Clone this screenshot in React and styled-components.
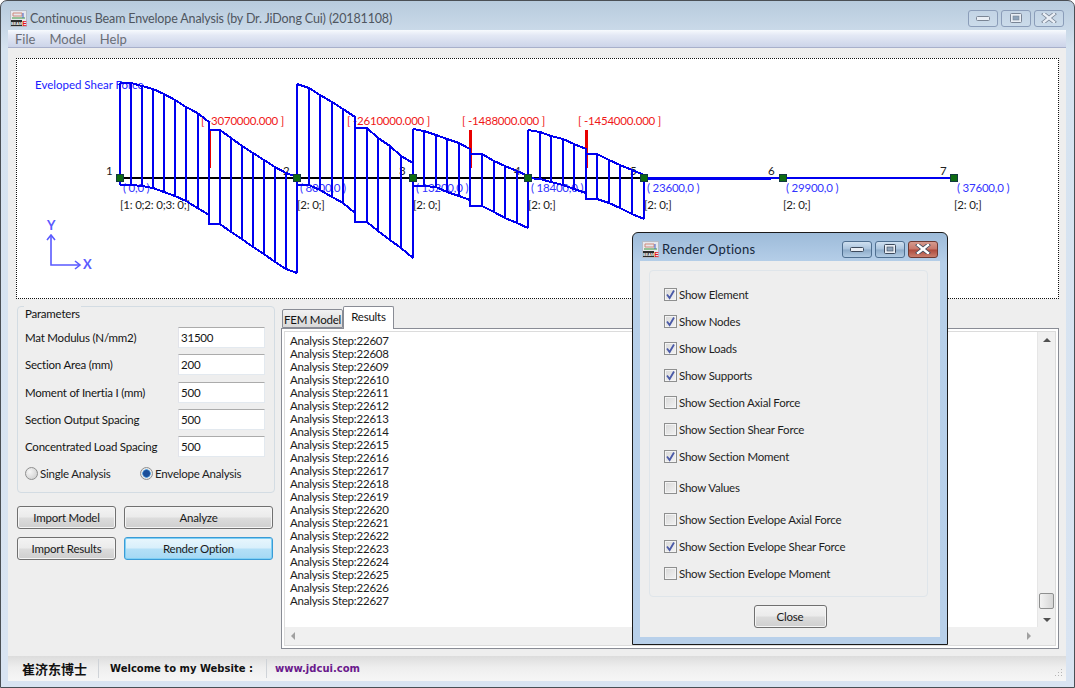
import React from "react";
import styled, { createGlobalStyle } from "styled-components";

const UI = `"Lato", "Open Sans", sans-serif`;

const Global = createGlobalStyle`
  html, body { margin: 0; padding: 0; background: #fff; }
  * { box-sizing: border-box; }
  body { font-family: ${UI}; font-size: 11.5px; letter-spacing: -0.22px; color: #141414; white-space: nowrap; }
`;

const Win = styled.div`
  position: relative;
  width: 1075px;
  height: 688px;
  overflow: hidden;
  display: flex;
  flex-direction: column;
  padding: 0 8px 6px 7px;
  border: 1px solid #4a4f55;
  border-radius: 7px 7px 0 0;
  background: linear-gradient(180deg, #b7cbdd 0, #d6e3f0 48px, #d9e4f2 100%);
`;
const TitleBar = styled.div`
  height: 29px;
  padding-top: 5px;
  display: flex;
  align-items: center;
  flex: none;
`;
const DialogTitle = styled(TitleBar)`
  height: 28px;
  padding-top: 4px;
`;
const AppIconBox = styled.span`
  width: 17px;
  height: 17px;
  margin: 0 3px 0 2px;
  display: block;
  flex: none;
`;
const TitleText = styled.div`
  flex: 1;
  font-size: ${p => (p.$active ? 13 : 12.5)}px;
  letter-spacing: ${p => (p.$active ? 0.3 : -0.14)}px;
  color: ${p => (p.$active ? "#16283c" : "#4f5660")};
`;
const Ctrls = styled.div`
  display: flex;
  gap: 3px;
  margin-right: 2px;
`;
const Ctrl = styled.div`
  width: 30px;
  height: 17px;
  border: 1px solid ${p => (p.$tone === "active" ? "#4f6f90" : p.$tone === "close" ? "#6d3a33" : "#8b9db9")};
  border-radius: 3px;
  display: flex;
  align-items: center;
  justify-content: center;
  background: ${p =>
    p.$tone === "close"
      ? "linear-gradient(180deg,#d59a8e 0,#c7776a 48%,#ad4a3c 52%,#c97f6e 100%)"
      : p.$tone === "active"
      ? "linear-gradient(180deg,#cfe0f0 0,#a9c3dd 48%,#8dabc9 52%,#b1cbe3 100%)"
      : "linear-gradient(180deg,#c3d4e5 0,#cbdbea 100%)"};
`;
const MenuBar = styled.div`
  height: 18px;
  flex: none;
  display: flex;
  align-items: center;
  gap: 14px;
  padding-left: 7px;
  font-size: 13px;
  letter-spacing: 0;
  color: #6a6e78;
  border-bottom: 1px solid #a8b0cb;
  background: linear-gradient(180deg, #f7fafd 0, #e4e9f5 30%, #ccd4e9 100%);
`;
const Main = styled.div`
  flex: 1;
  min-height: 0;
  background: #eeeeee;
  padding: 10px 7px 0 8px;
  display: flex;
  flex-direction: column;
`;
const Chart = styled.div`
  height: 241px;
  flex: none;
  border: 1px dotted #111;
  background: #fff;
`;
const ChartSvg = styled.svg`
  display: block;
  width: 100%;
  height: 100%;
  font-family: ${UI};
`;
const Lower = styled.div`
  flex: 1;
  min-height: 0;
  display: flex;
  margin-top: 7px;
  padding-bottom: 7px;
`;
const LeftCol = styled.div`
  width: 256px;
  margin-left: 1px;
  margin-right: 8px;
  flex: none;
  display: flex;
  flex-direction: column;
`;
const Group = styled.fieldset`
  margin: 0;
  padding: 17px 9px 0 7px;
  height: 187px;
  border: 1px solid #d3dce3;
  border-radius: 4px;
  position: relative;
`;
const GroupTitle = styled.span`
  position: absolute;
  left: 6px;
  top: -1px;
  padding: 0 1px;
  line-height: 16px;
  background: #eee;
`;
const Field = styled.div`
  height: 27.25px;
  display: flex;
  align-items: center;
  justify-content: space-between;
`;
const Input = styled.div`
  width: 87px;
  height: 21px;
  line-height: 19px;
  padding-left: 2px;
  background: #fff;
  border: 1px solid;
  border-color: #ababab #e3e9ef #e3e9ef #e2e3ea;
`;
const RadioRow = styled.div`
  display: flex;
  align-items: center;
  margin-top: 1px;
  height: 24px;
`;
const RadioItem = styled.div`
  display: flex;
  align-items: center;
  gap: 2px;
  color: #222;
  width: ${p => p.$w}px;
`;
const RadioDot = styled.span`
  width: 13px;
  height: 13px;
  border-radius: 50%;
  border: 1px solid #8e8f8f;
  flex: none;
  background: ${p =>
    p.$on
      ? "radial-gradient(circle at 50% 50%, #1b4f9a 0 3px, #5aa3e0 4px, #e9e9e9 4.5px)"
      : "radial-gradient(circle at 35% 35%, #f6f6f6, #c9c9c9)"};
`;
const BtnGrid = styled.div`
  display: grid;
  grid-template-columns: 99px 149px;
  column-gap: 8px;
  row-gap: 8px;
  margin-top: 13px;
`;
const Btn = styled.div`
  height: 23px;
  line-height: 21px;
  text-align: center;
  border: 1px solid ${p => (p.$focus ? "#3a9bd6" : "#707070")};
  border-radius: 3px;
  color: #1a1a1a;
  background: ${p =>
    p.$focus
      ? "linear-gradient(180deg,#e8f6fd 0,#d8effb 48%,#b4e0f7 52%,#a4d8f4 100%)"
      : "linear-gradient(180deg,#f3f3f3 0,#ebebeb 48%,#dcdcdc 52%,#cfcfcf 100%)"};
  box-shadow: ${p => (p.$focus ? "inset 0 0 0 1px #7fd0f5" : "inset 0 0 0 1px #f5f5f5")};
`;
const RightCol = styled.div`
  flex: 1;
  min-width: 0;
  display: flex;
  flex-direction: column;
`;
const Tabs = styled.div`
  height: 22px;
  flex: none;
  display: flex;
  align-items: flex-end;
  padding-left: 1px;
`;
const Tab = styled.div`
  position: relative;
  height: ${p => (p.$on ? 23 : 19)}px;
  line-height: 19px;
  width: ${p => p.$w}px;
  text-align: center;
  border: 1px solid #898c95;
  border-bottom: ${p => (p.$on ? "none" : "1px solid #898c95")};
  border-radius: 2px 2px 0 0;
  margin-bottom: ${p => (p.$on ? -1 : 0)}px;
  background: ${p => (p.$on ? "#fff" : "linear-gradient(180deg,#f2f2f2,#d9d9d9)")};
  z-index: ${p => (p.$on ? 2 : 1)};
`;
const TabPanel = styled.div`
  flex: 1;
  min-height: 0;
  border: 1px solid #898c95;
  background: #fff;
  padding: 2px;
`;
const LogBox = styled.div`
  height: 100%;
  border: 1px solid #dcdcdc;
  display: grid;
  grid-template-columns: 1fr 18px;
  grid-template-rows: 1fr 18px;
`;
const Log = styled.div`
  padding: 2px 0 0 5px;
  line-height: 13px;
  overflow: hidden;
  color: #1c1c1c;
`;
const ScrollV = styled.div`
  background: #f0f0f0;
  border-left: 1px solid #e6e6e6;
  position: relative;
  display: flex;
  flex-direction: column;
  justify-content: space-between;
  align-items: center;
  padding: 6px 0 5px;
`;
const Thumb = styled.div`
  position: absolute;
  left: 1px;
  right: 1px;
  bottom: 18px;
  height: 16px;
  border: 1px solid #8e8f8f;
  border-radius: 2px;
  background: linear-gradient(90deg, #f3f3f3, #d6d6d6);
`;
const ScrollH = styled.div`
  background: #f0f0f0;
  display: flex;
  align-items: center;
  justify-content: space-between;
  padding: 0 6px;
`;
const Corner = styled.div`
  background: #f0f0f0;
`;
const Arrow = styled.span`
  width: 0;
  height: 0;
  border-style: solid;
  border-color: transparent;
  ${p => p.$dir === "up" && "border-width: 0 4px 4px; border-bottom-color: #505050;"}
  ${p => p.$dir === "down" && "border-width: 4px 4px 0; border-top-color: #505050;"}
  ${p => p.$dir === "left" && "border-width: 4px 4px 4px 0; border-right-color: #a0a0a0;"}
  ${p => p.$dir === "right" && "border-width: 4px 0 4px 4px; border-left-color: #a0a0a0;"}
`;
const Status = styled.div`
  height: 25px;
  flex: none;
  position: relative;
  display: flex;
  align-items: center;
  padding-left: 14px;
  letter-spacing: 0;
  background: linear-gradient(180deg, #dcdcdc 0, #eeeeee 45%, #f6f6f6 100%);
`;
const StatusCn = styled.span`
  font-family: "Noto Sans CJK SC", sans-serif;
  font-weight: 700;
  font-size: 13px;
  width: 76px;
  color: #111;
`;
const StatusWel = styled.span`
  font-family: "DejaVu Sans", sans-serif;
  font-weight: 700;
  font-size: 10px;
  width: 167px;
  color: #111;
  padding-left: 11px;
`;
const StatusUrl = styled.span`
  font-family: "DejaVu Sans", sans-serif;
  font-weight: 700;
  font-size: 10px;
  color: #6a1a8c;
  padding-left: 8px;
`;
const StatusSep = styled.span`
  width: 1px;
  height: 19px;
  background: #cfd3d8;
  flex: none;
`;
const Grip = styled.svg`
  position: absolute;
  right: 3px;
  bottom: 3px;
  width: 10px;
  height: 10px;
`;
const Dialog = styled.div`
  position: absolute;
  left: 631px;
  top: 231px;
  width: 316px;
  height: 413px;
  border: 1px solid #1a1a1a;
  border-radius: 6px 6px 0 0;
  padding: 0 7px 7px;
  display: flex;
  flex-direction: column;
  background: linear-gradient(180deg, #9dbbd9 0, #b6cfe9 30px, #b8d0ea 100%);
`;
const DialogBody = styled.div`
  flex: 1;
  background: #eeeeee;
  padding: 9px 12px 0 9px;
  display: flex;
  flex-direction: column;
`;
const DialogGroup = styled.div`
  height: 327px;
  flex: none;
  border: 1px solid #dfe5ea;
  border-radius: 4px;
  padding: 10px 0 0 14px;
  display: flex;
  flex-direction: column;
`;
const CheckRow = styled.div`
  height: 27px;
  flex: none;
  margin-top: ${p => p.$gap || 0}px;
  display: flex;
  align-items: center;
  gap: 2px;
  color: #1e1e1e;
`;
const CheckBox = styled.span`
  width: 13px;
  height: 13px;
  flex: none;
  border: 1px solid #8e8f8f;
  background: linear-gradient(135deg, #d8d8d8 0, #f3f3f3 100%);
  box-shadow: inset 0 0 0 1px #f4f4f4;
  display: flex;
  align-items: center;
  justify-content: center;
`;
const CloseRow = styled.div`
  display: flex;
  justify-content: center;
  margin-top: 8px;
  padding-left: 3px;
`;
const CloseBtn = styled(Btn)`
  width: 73px;
`;

const spans = [
  [[120,83,185],[131,83,185],[142,86,186],[153,89,188],[164,94,192],[175,100,196],[186,107,201],[197.5,113,208],[209,122,215],[209,130,224],[220,130,224],[231,138,232],[242,146,239],[253,153,247],[264,160,254],[275,167,262],[286,173,269],[297,177,273]],
  [[297,84,185],[309,88,185],[320,95,190],[332,102,197],[343,109,203],[355,117,213],[355,128,222],[367,128,222],[378,138,231],[390,146,240],[401,156,248],[413,163,258]],
  [[413,129,186],[424,131,186],[436,135,187],[447,139,192],[459,143,196],[470,149,200],[470,154,206],[482,154,206],[494,161,212],[505,166,218],[517,171,223],[528,176,228]],
  [[528,130,178],[540,132,179],[551,136,182],[563,139,185],[574,144,189],[586,149,193],[586,154,199],[597,154,199],[609,160,203],[620,165,208],[632,170,214],[644,175,219]],
];
const nodes = [
  { x: 120, n: "1", nx: 106, c: "( 0,0 )", cx: 123, l: "[1: 0;2: 0;3: 0;]" },
  { x: 297, n: "2", nx: 283, c: "( 8000,0 )", cx: 300, l: "[2: 0;]" },
  { x: 413, n: "3", nx: 399, c: "( 13200,0 )", cx: 416, l: "[2: 0;]" },
  { x: 528, n: "4", nx: 514, c: "( 18400,0 )", cx: 531, l: "[2: 0;]" },
  { x: 644, n: "5", nx: 630, c: "( 23600,0 )", cx: 647, l: "[2: 0;]" },
  { x: 783, n: "6", nx: 768, c: "( 29900,0 )", cx: 786, l: "[2: 0;]" },
  { x: 954, n: "7", nx: 940, c: "( 37600,0 )", cx: 957, l: "[2: 0;]" },
];
const loads = [
  { x: 210, w: 2, t: "[ -3070000.000 ]", tx: 201, top: 130 },
  { x: 355, w: 2, t: "[ -2610000.000 ]", tx: 347, top: 128 },
  { x: 470, w: 3, t: "[ -1488000.000 ]", tx: 462, top: 130 },
  { x: 586, w: 3, t: "[ -1454000.000 ]", tx: 578, top: 130 },
];

const AppIcon = () => (
  <svg viewBox="0 0 17 17" width="17" height="17">
    <rect x="0.5" y="0.5" width="16" height="16" fill="#e6e8ee" stroke="#b6bcc6" />
    <path d="M3 3h9v3H3z" fill="none" stroke="#d08a7a" />
    <path d="M2 8h13" stroke="#3f9a3f" />
    <path d="M13 3v5" stroke="#4466cc" />
    <rect x="1" y="10" width="11" height="6" fill="#2b2b2b" />
    <text x="1" y="15" fontSize="3.8" letterSpacing="0" fontWeight="700" fill="#fff" fontFamily="Liberation Sans, sans-serif">BEAM</text>
    <text x="12.2" y="16" fontSize="7" letterSpacing="0" fontWeight="700" fill="#e01818" fontFamily="Liberation Sans, sans-serif">E</text>
  </svg>
);

const CtrlGlyph = ({ kind, active }) => {
  const fill = "#e9eef5";
  const stroke = active ? "#3d4a5c" : "#7a8595";
  if (kind === "min")
    return (
      <svg width="14" height="6" viewBox="0 0 14 6">
        <rect x="0.5" y="1.5" width="13" height="4" rx="1" fill={fill} stroke={stroke} />
      </svg>
    );
  if (kind === "max")
    return (
      <svg width="12" height="10" viewBox="0 0 12 10">
        <rect x="0.5" y="0.5" width="11" height="9" rx="1" fill={fill} stroke={stroke} />
        <rect x="3" y="3" width="6" height="4" fill="#8ea3ba" stroke={stroke} strokeWidth="0.6" />
      </svg>
    );
  return (
    <svg width="16" height="10" viewBox="0 0 16 10">
      <path d="M3 1 L13 9 M13 1 L3 9" stroke={stroke} strokeWidth="4" strokeLinecap="square" />
      <path d="M3 1 L13 9 M13 1 L3 9" stroke={active ? "#fff" : fill} strokeWidth="2.4" strokeLinecap="square" />
    </svg>
  );
};

const WinControls = ({ active }) => (
  <Ctrls>
    <Ctrl $tone={active ? "active" : undefined}><CtrlGlyph kind="min" active={active} /></Ctrl>
    <Ctrl $tone={active ? "active" : undefined}><CtrlGlyph kind="max" active={active} /></Ctrl>
    <Ctrl $tone={active ? "close" : undefined}><CtrlGlyph kind="close" active={active} /></Ctrl>
  </Ctrls>
);

const Check = ({ on, label, gap }) => (
  <CheckRow $gap={gap}>
    <CheckBox>
      {on && (
        <svg width="11" height="11" viewBox="0 0 11 11">
          <path d="M2 5.5 L4.6 9 L9 1.5" fill="none" stroke="#4a5aa8" strokeWidth="1.8" />
        </svg>
      )}
    </CheckBox>
    {label}
  </CheckRow>
);

const BeamChart = () => (
  <ChartSvg viewBox="17 59 1041 239">
    <g fontSize="11.5">
      <text x="35" y="89" fill="#1a1aff" letterSpacing="0">Eveloped Shear Force</text>
      {nodes.map(n => (
        <g key={n.n}>
          <text x={n.nx} y="175" fill="#222">{n.n}</text>
          <text x={n.cx} y="192" fill="#3333ff">{n.c}</text>
          <text x={n.x} y="209" fill="#222">{n.l}</text>
        </g>
      ))}
      {loads.map(l => (
        <g key={l.x}>
          <text x={l.tx} y="125" fill="#f01818">{l.t}</text>
          <path d={`M${l.x} ${l.top}V168`} stroke="#e80000" strokeWidth={l.w} shapeRendering="crispEdges" />
        </g>
      ))}
    </g>
    <g shapeRendering="crispEdges">
      <path d="M120 178H644" stroke="#000" strokeWidth="2" />
      <path d="M644 178H954" stroke="#0000f0" strokeWidth="2" />
      <path d="M644 176.5L760 177L783 177V179L760 180L644 180.5Z" fill="#0000f0" />
      <g fill="none" stroke="#0000f0" strokeWidth="2">
        {spans.map((s, i) => (
          <g key={i}>
            <polyline points={s.map(p => `${p[0]},${p[1]}`).join(" ")} />
            <polyline points={s.map(p => `${p[0]},${p[2]}`).join(" ")} />
            {s.map((p, j) => (
              <path key={j} d={`M${p[0]} ${p[1]}V${p[2]}`} />
            ))}
          </g>
        ))}
      </g>
      {nodes.map(n => (
        <rect key={n.n} x={n.x - 3.5} y="174.5" width="7" height="7" fill="#0e6b12" stroke="#123a40" />
      ))}
    </g>
    <g fill="none" stroke="#5a5aff" strokeWidth="1.6">
      <path d="M51 236V265H79" />
      <path d="M47 240L51 235L55 240" />
      <path d="M75 261L80 265L75 269" />
    </g>
    <text x="47" y="230" fill="#5a5aff" fontSize="13" fontWeight="700">Y</text>
    <text x="83" y="269" fill="#5a5aff" fontSize="13" fontWeight="700">X</text>
  </ChartSvg>
);

const fields = [
  ["Mat Modulus (N/mm2)", "31500"],
  ["Section Area  (mm)", "200"],
  ["Moment of Inertia I (mm)", "500"],
  ["Section Output Spacing", "500"],
  ["Concentrated Load Spacing", "500"],
];
const logLines = Array.from({ length: 21 }, (_, i) => `Analysis Step:${22607 + i}`);
const options = [
  ["Show Element", true],
  ["Show Nodes", true],
  ["Show Loads", true],
  ["Show Supports", true],
  ["Show Section Axial Force", false],
  ["Show Section Shear Force", false],
  ["Show Section Moment", true],
  ["Show Values", false, 4],
  ["Show Section Evelope Axial Force", false, 5],
  ["Show Section Evelope Shear Force", true],
  ["Show Section Evelope Moment", false],
];

export default function App() {
  return (
    <>
      <Global />
      <Win>
        <TitleBar>
          <AppIconBox><AppIcon /></AppIconBox>
          <TitleText>Continuous Beam Envelope Analysis (by Dr. JiDong Cui) (20181108)</TitleText>
          <WinControls />
        </TitleBar>
        <MenuBar>
          <span>File</span>
          <span>Model</span>
          <span>Help</span>
        </MenuBar>
        <Main>
          <Chart><BeamChart /></Chart>
          <Lower>
            <LeftCol>
              <Group>
                <GroupTitle>Parameters</GroupTitle>
                {fields.map(([l, v]) => (
                  <Field key={l}>
                    <span>{l}</span>
                    <Input>{v}</Input>
                  </Field>
                ))}
                <RadioRow>
                  <RadioItem $w={115}><RadioDot />Single Analysis</RadioItem>
                  <RadioItem $w={125}><RadioDot $on />Envelope Analysis</RadioItem>
                </RadioRow>
              </Group>
              <BtnGrid>
                <Btn>Import Model</Btn>
                <Btn>Analyze</Btn>
                <Btn>Import Results</Btn>
                <Btn $focus>Render Option</Btn>
              </BtnGrid>
            </LeftCol>
            <RightCol>
              <Tabs>
                <Tab $w={61}>FEM Model</Tab>
                <Tab $on $w={51}>Results</Tab>
              </Tabs>
              <TabPanel>
                <LogBox>
                  <Log>
                    {logLines.map(t => <div key={t}>{t}</div>)}
                  </Log>
                  <ScrollV>
                    <Arrow $dir="up" />
                    <Thumb />
                    <Arrow $dir="down" />
                  </ScrollV>
                  <ScrollH>
                    <Arrow $dir="left" />
                    <Arrow $dir="right" />
                  </ScrollH>
                  <Corner />
                </LogBox>
              </TabPanel>
            </RightCol>
          </Lower>
        </Main>
        <Status>
          <StatusCn>崔济东博士</StatusCn>
          <StatusSep />
          <StatusWel>Welcome to my Website :</StatusWel>
          <StatusSep />
          <StatusUrl>www.jdcui.com</StatusUrl>
          <Grip viewBox="0 0 10 10">
            <path d="M8 1h1v1H8zM5 4h1v1H5zM8 4h1v1H8zM2 7h1v1H2zM5 7h1v1H5zM8 7h1v1H8z" fill="#b5b5b5" />
          </Grip>
        </Status>
        <Dialog>
          <DialogTitle>
            <AppIconBox><AppIcon /></AppIconBox>
            <TitleText $active>Render Options</TitleText>
            <WinControls active />
          </DialogTitle>
          <DialogBody>
            <DialogGroup>
              {options.map(([l, on, gap]) => (
                <Check key={l} label={l} on={on} gap={gap} />
              ))}
            </DialogGroup>
            <CloseRow>
              <CloseBtn>Close</CloseBtn>
            </CloseRow>
          </DialogBody>
        </Dialog>
      </Win>
    </>
  );
}
